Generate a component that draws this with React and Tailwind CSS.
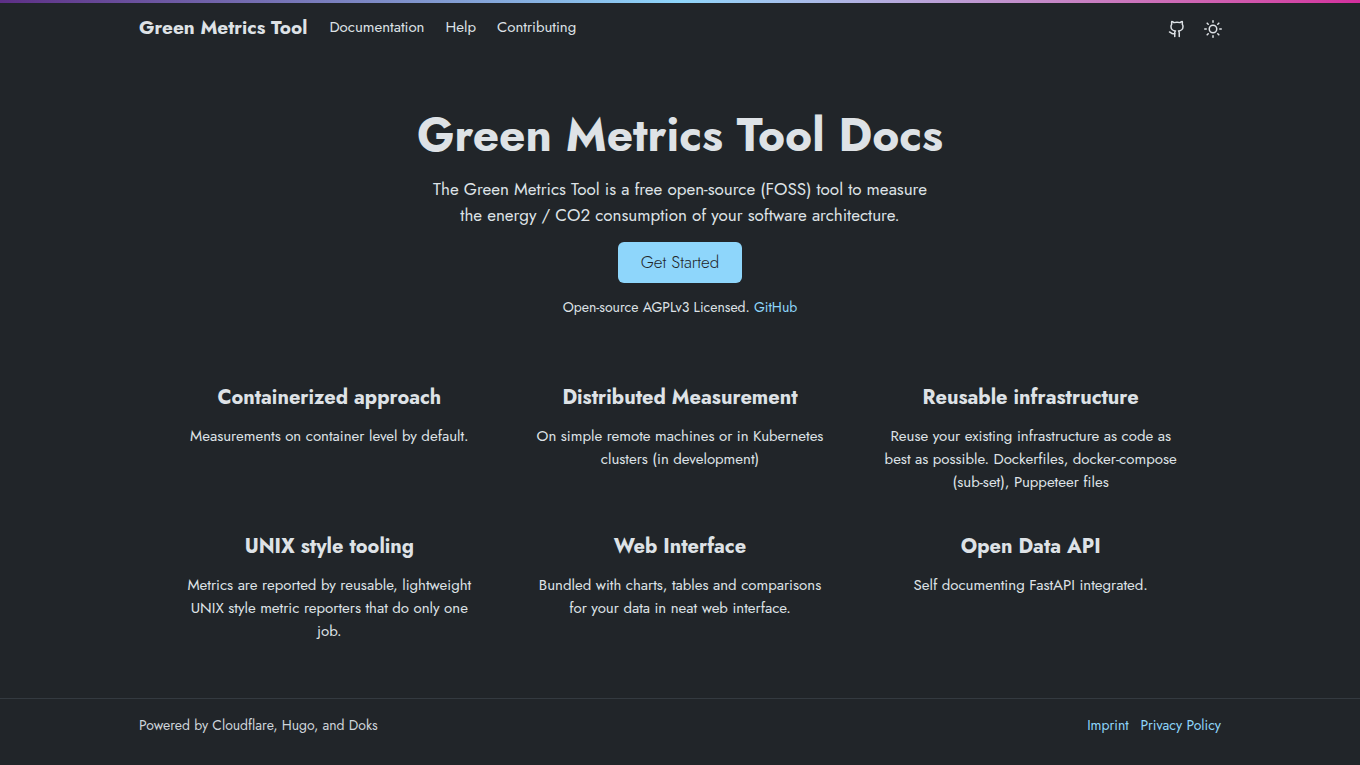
const navLinks = ["Documentation", "Help", "Contributing"];

const features = [
  { title: "Containerized approach", text: "Measurements on container level by default." },
  { title: "Distributed Measurement", text: "On simple remote machines or in Kubernetes clusters (in development)" },
  { title: "Reusable infrastructure", text: "Reuse your existing infrastructure as code as best as possible. Dockerfiles, docker-compose (sub-set), Puppeteer files" },
  { title: "UNIX style tooling", text: "Metrics are reported by reusable, lightweight UNIX style metric reporters that do only one job." },
  { title: "Web Interface", text: "Bundled with charts, tables and comparisons for your data in neat web interface." },
  { title: "Open Data API", text: "Self documenting FastAPI integrated." },
];

function Icon({ children }) {
  return (
    <svg viewBox="0 0 24 24" className="size-[18px] overflow-visible" fill="none" stroke="currentColor" strokeWidth="2" strokeLinecap="round" strokeLinejoin="round" aria-hidden="true">
      {children}
    </svg>
  );
}

function Header() {
  return (
    <header>
      <div className="h-[3px] bg-linear-to-r from-[#5d2f86] via-[#8ed6fb] to-[#d32e9d]" />
      <div className="mx-auto flex h-[50px] w-full max-w-[1106px] items-center px-3">
        <a href="#home" className="mr-[22px] text-[19px] leading-7 font-bold">Green Metrics Tool</a>
        <nav aria-label="Main" className="flex gap-[21px] pb-0.5">
          {navLinks.map((label) => (
            <a key={label} href={"#" + label.toLowerCase()} className="text-[15px] leading-6">{label}</a>
          ))}
        </nav>
        <div className="-mr-px ml-auto flex items-center gap-[18px] pt-0.5">
          <a href="#github" aria-label="GitHub" className="flex">
            <Icon>
              <path d="M15 22v-4a4.8 4.8 0 0 0-1-3.5c3 0 6-2 6-5.5.08-1.25-.27-2.48-1-3.5.28-1.15.28-2.35 0-3.5 0 0-1 0-3 1.5-2.64-.5-5.36-.5-8 0C6 2 5 2 5 2c-.3 1.15-.3 2.35 0 3.5A5.403 5.403 0 0 0 4 9c0 3.5 3 5.5 6 5.5-.39.49-.68 1.05-.85 1.65-.17.6-.22 1.23-.15 1.85v4" />
              <path d="M9 18c-4.51 2-5-2-7-2" />
            </Icon>
          </a>
          <button type="button" aria-label="Toggle theme" className="flex">
            <Icon>
              <circle cx="12" cy="12" r="5" />
              <path d="M12 1v2M12 21v2M4.22 4.22l1.42 1.42M18.36 18.36l1.42 1.42M1 12h2M21 12h2M4.22 19.78l1.42-1.42M18.36 5.64l1.42-1.42" />
            </Icon>
          </button>
        </div>
      </div>
    </header>
  );
}

function Hero() {
  return (
    <section className="flex flex-col items-center px-3 pt-[54px] text-center">
      <h1 className="text-[46px] leading-[56px] font-bold">Green Metrics Tool Docs</h1>
      <p className="mt-[13px] max-w-[520px] text-[17px] leading-[26px]">
        The Green Metrics Tool is a free open-source (FOSS) tool to measure the energy / CO2 consumption of your software architecture.
      </p>
      <a href="#start" className="mt-3.5 rounded-md bg-[#8ed6fb] px-[23px] pt-2 pb-[9px] text-[17px] leading-6 font-light text-[#212529]">Get Started</a>
      <p className="mt-3 text-[14px] leading-6">
        Open-source AGPLv3 Licensed. <a href="#github" className="text-[#8ed6fb]">GitHub</a>
      </p>
    </section>
  );
}

export default function App() {
  return (
    <div className="flex min-h-screen flex-col bg-[#212529] font-['Jost','Lato',sans-serif] text-[#dee2e6]">
      <Header />
      <main className="grow">
        <Hero />
        <section className="mx-auto mt-[65px] grid max-w-[1052px] pb-4 text-center md:grid-cols-3">
          {features.map((f) => (
            <div key={f.title} className="px-6 pb-[39px]">
              <h2 className="text-[20px] leading-7 font-bold">{f.title}</h2>
              <p className="mt-[13px] text-[15px] leading-[23px]">{f.text}</p>
            </div>
          ))}
        </section>
      </main>
      <footer className="border-t border-[#343a40]">
        <div className="mx-auto flex max-w-[1106px] justify-between px-3 pt-3.5 pb-7 text-[14px] leading-6">
          <p className="text-[#ced4da]">Powered by Cloudflare, Hugo, and Doks</p>
          <div className="flex gap-3 text-[#8ed6fb]">
            <a href="#imprint">Imprint</a>
            <a href="#privacy">Privacy Policy</a>
          </div>
        </div>
      </footer>
    </div>
  );
}
